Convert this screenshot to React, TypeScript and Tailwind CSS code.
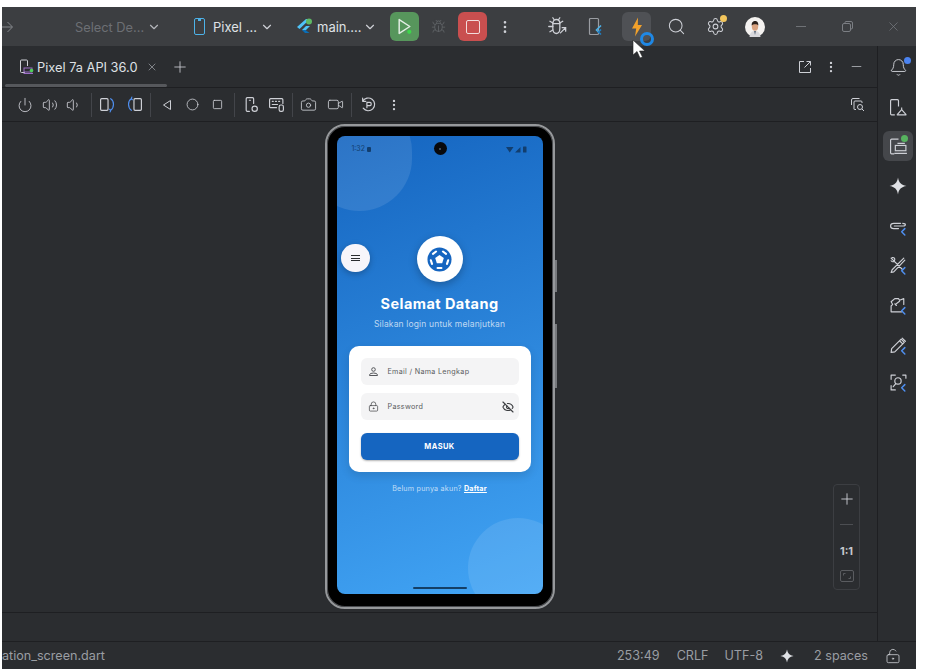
import {
  Bell,
  Bug,
  Camera,
  ChevronDown,
  Circle,
  EllipsisVertical,
  EyeOff,
  LockKeyhole,
  LockKeyholeOpen,
  Minus,
  Plus,
  Power,
  Search,
  Settings,
  Square,
  Video,
  Volume1,
  Volume2,
  X,
} from "lucide-react";
import type { ReactNode } from "react";

const ICON = "#ced0d6";

function Svg({ size = 17, children }: { size?: number; children: ReactNode }) {
  return (
    <svg width={size} height={size} viewBox="0 0 16 16" fill="none" stroke={ICON} strokeWidth="1.1" strokeLinecap="round" strokeLinejoin="round">
      {children}
    </svg>
  );
}

function Sparkle({ size = 16, fill = "#dfe1e5" }: { size?: number; fill?: string }) {
  return (
    <svg width={size} height={size} viewBox="0 0 16 16">
      <path d="M8 0.5C8.6 5 11 7.4 15.5 8C11 8.6 8.6 11 8 15.5C7.4 11 5 8.6 0.5 8C5 7.4 7.4 5 8 0.5Z" fill={fill} />
    </svg>
  );
}

function FlutterMark() {
  return (
    <svg width="17" height="17" viewBox="0 0 17 17">
      <path d="M1 9L10 1H14L3.5 11Z" fill="#4fc3f7" />
      <path d="M6 12L10 8H14L9.5 12.5Z" fill="#4fc3f7" />
      <path d="M6 12L9 15H13.5L9.5 12Z" fill="#0a6fb8" />
      <circle cx="13" cy="3.5" r="3" fill="#5fb865" />
    </svg>
  );
}

function TinyFlutter({ x = 11, y = 10 }: { x?: number; y?: number }) {
  return <path d={`M${x + 3} ${y}L${x} ${y + 3}L${x + 3} ${y + 6}`} stroke="#4f8ff0" strokeWidth="1.4" fill="none" />;
}

function Avatar() {
  return (
    <svg width="20" height="20" viewBox="0 0 20 20">
      <circle cx="10" cy="10" r="10" fill="#f4f2f0" />
      <path d="M4.5 20C5 15 7.5 14 10 14C12.5 14 15 15 15.5 20Z" fill="#d8d8dc" />
      <path d="M9 14L10 18L11 14Z" fill="#5d6b7d" />
      <ellipse cx="10" cy="9.5" rx="3.2" ry="4.2" fill="#d9a27f" />
      <path d="M6.7 8.5C6.5 5 8.5 4 10 4C12 4 13.6 5.2 13.3 8.5C12.5 6.8 8 6.8 6.7 8.5Z" fill="#2c211c" />
    </svg>
  );
}

function Sep() {
  return <div className="h-[24px] w-px shrink-0 bg-[#43454a]" />;
}

function Cell({ w, children }: { w: string; children: ReactNode }) {
  return <div className={`flex shrink-0 items-center justify-center ${w}`}>{children}</div>;
}

function TitleBar() {
  return (
    <div className="relative flex h-[39px] shrink-0 items-center bg-[#3c3e41] text-[13px] text-[#dfe1e5]">
      <svg className="ml-0 shrink-0" width="11" height="12" viewBox="0 0 11 12" fill="none" stroke="#85888d" strokeWidth="1">
        <path d="M0 6H10M5.5 1L10.5 6L5.5 11" />
      </svg>
      <span className="ml-[62px] w-[71px] shrink-0 translate-y-px whitespace-nowrap text-[12.8px] text-[#6c6f74]">Select De...</span>
      <ChevronDown className="ml-[1px] shrink-0" size={14} color="#b4b6bb" />
      <div className="ml-[33px] flex h-[17px] w-[11px] shrink-0 items-start justify-center rounded-[2px] border-[1.5px] border-[#4db2e8]">
        <div className="h-[2px] w-[3px] bg-[#4db2e8]" />
      </div>
      <span className="ml-[8px] w-[42px] shrink-0 translate-y-px whitespace-nowrap">Pixel ...</span>
      <ChevronDown className="ml-[5px] shrink-0" size={14} color="#ced0d6" />
      <div className="ml-[22px] shrink-0"><FlutterMark /></div>
      <span className="ml-[4px] w-[43px] shrink-0 translate-y-px whitespace-nowrap">main....</span>
      <ChevronDown className="ml-[3px] shrink-0" size={14} color="#ced0d6" />
      <div className="ml-[13px] flex h-[29px] w-[29px] shrink-0 items-center justify-center rounded-[6px] bg-[#57965c]">
        <svg width="17" height="17" viewBox="0 0 16 16" fill="none">
          <path d="M3 1.5L13 8L3 14.5Z" stroke="#e3eee4" strokeWidth="1.4" strokeLinejoin="round" />
          <circle cx="12.5" cy="13" r="2" fill="#3dd64b" />
        </svg>
      </div>
      <Cell w="w-[38px]"><Bug size={15} color="#5f6266" strokeWidth={1.4} /></Cell>
      <div className="ml-px flex h-[29px] w-[29px] shrink-0 items-center justify-center rounded-[6px] bg-[#c94f4f]">
        <div className="h-[14px] w-[14px] rounded-[2px] border-[1.5px] border-[#f2dcdc]" />
      </div>
      <Cell w="w-[36px]"><EllipsisVertical size={16} color={ICON} /></Cell>
      <div className="ml-[24px] shrink-0">
        <svg width="21" height="21" viewBox="0 0 18 18" fill="none" stroke={ICON} strokeWidth="1.1" strokeLinecap="round">
          <path d="M5 6.5C5 4 6.5 3 8 3C9.5 3 11 4 11 6.5V11C11 13.5 9.5 15 8 15C6.5 15 5 13.5 5 11Z" />
          <path d="M5 6.5H11M6 3L5 1.5M10 3L11 1.5M5 9H1.5M5 6L2.5 4.5M5 12L2.5 13.5M11 6L13.5 4.5" />
          <path d="M11.5 14.5L16 10M13 10H16V13" />
        </svg>
      </div>
      <div className="ml-[20px] shrink-0">
        <svg width="16" height="19" viewBox="0 0 16 18" fill="none">
          <rect x="1.5" y="1" width="9" height="16" rx="1" stroke="#9a9da2" strokeWidth="1.2" />
          <path d="M13 8L8.5 12.5L11 15" stroke="#4db2e8" strokeWidth="1.6" />
          <path d="M13 12L10.5 14.5L13 17" stroke="#1f7fc4" strokeWidth="1.6" />
        </svg>
      </div>
      <div className="ml-[18px] flex h-[29px] w-[29px] shrink-0 items-center justify-center rounded-[6px] bg-[#4f5155]">
        <svg width="12" height="20" viewBox="0 0 12 20">
          <path d="M7 0.5L1 11.5H5.2L4 19.5L11 8H6.8Z" fill="#f2a12b" />
        </svg>
      </div>
      <div className="ml-[16px] shrink-0"><Search size={19} color={ICON} strokeWidth={1.3} /></div>
      <div className="relative ml-[20px] shrink-0">
        <Settings size={19} color={ICON} strokeWidth={1.3} />
        <div className="absolute right-[-2px] top-[-2px] h-[7px] w-[7px] rounded-full bg-[#f2c55c]" />
      </div>
      <div className="ml-[20px] shrink-0"><Avatar /></div>
      <Cell w="ml-[13px] w-[46px]"><div className="h-px w-[10px] bg-[#6f7276]" /></Cell>
      <Cell w="w-[46px]">
        <svg width="11" height="11" viewBox="0 0 11 11" fill="none" stroke="#7b7e83">
          <rect x="0.5" y="2.5" width="8" height="8" rx="1.5" />
          <path d="M3 2.5V1.5Q3 0.5 4 0.5H9Q10.5 0.5 10.5 2V7Q10.5 8 9 8" />
        </svg>
      </Cell>
      <Cell w="w-[46px]"><X size={15} color="#7b7e83" strokeWidth={1.1} /></Cell>

      {/* busy ring + pointer sit over the button */}
      <div className="absolute left-[638px] top-[25px] h-[14px] w-[14px] rounded-full border-[3px] border-[#1f88e5]" />
      <svg className="absolute left-[630px] top-[32px] z-10" width="14" height="20" viewBox="0 0 14 20">
        <path d="M1 1V16L5 12.5L8 19L10.5 18L7.5 12H13Z" fill="#fff" stroke="#222" strokeWidth="0.6" />
      </svg>
    </div>
  );
}

function TabRow() {
  return (
    <div className="relative flex h-[42px] shrink-0 items-center border-b border-[#1e1f22] text-[12.8px] text-[#dfe1e5]">
      <div className="ml-[17px] shrink-0">
        <svg width="15" height="15" viewBox="0 0 15 15" fill="none">
          <path d="M6 13.5H2.5Q1.5 13.5 1.5 12.5V2Q1.5 1 2.5 1H7.5Q8.5 1 8.5 2V7" stroke={ICON} />
          <rect x="5" y="9" width="8" height="4" stroke="#9b6fc6" />
          <path d="M4.5 14.5H14" stroke="#9b6fc6" />
          <circle cx="12.5" cy="11.5" r="1.8" fill="#4fd15a" />
        </svg>
      </div>
      <span className="ml-[3px] w-[100px] shrink-0 translate-y-px whitespace-nowrap">Pixel 7a API 36.0</span>
      <X className="ml-[9px] shrink-0" size={12} color="#7f8287" />
      <Plus className="ml-[13px] shrink-0" size={18} color={ICON} strokeWidth={1.1} />
      <div className="ml-auto flex items-center pr-[9px]">
        <Cell w="w-[26px]">
          <svg width="14" height="14" viewBox="0 0 14 14" fill="none" stroke={ICON}>
            <path d="M6 1.5H1.5V12.5H12.5V8M8.5 1.5H12.5V5.5M12.5 1.5L6.5 7.5" />
          </svg>
        </Cell>
        <Cell w="w-[26px]"><EllipsisVertical size={14} color={ICON} /></Cell>
        <Cell w="w-[24px]"><Minus size={15} color={ICON} strokeWidth={1.1} /></Cell>
      </div>
      <div className="absolute bottom-0 left-[3px] h-[3px] w-[162px] rounded-full bg-[#56585c]" />
    </div>
  );
}

function Toolbar() {
  return (
    <div className="flex h-[34px] shrink-0 items-center border-b border-[#1e1f22] pl-[10px]">
      <Cell w="w-[25px]"><Power size={16} color={ICON} strokeWidth={1.3} /></Cell>
      <Cell w="w-[25px]"><Volume2 size={16} color={ICON} strokeWidth={1.3} /></Cell>
      <Cell w="w-[24px]"><Volume1 size={16} color={ICON} strokeWidth={1.3} /></Cell>
      <div className="ml-[5px]"><Sep /></div>
      <Cell w="ml-[3px] w-[25px]">
        <Svg>
          <rect x="1.5" y="2.5" width="7" height="11" rx="1" />
          <path d="M11 2.5C14.5 4.5 14.5 11 11 13.5M10 12.5L11 13.5L10.5 15" stroke="#4f8ff0" />
        </Svg>
      </Cell>
      <Cell w="ml-[2px] w-[25px]">
        <Svg>
          <rect x="7.5" y="2.5" width="7" height="11" rx="1" />
          <path d="M5 2.5C1.5 4.5 1.5 11 5 13.5M6 3.5L5 2.5L5.5 1" stroke="#4f8ff0" />
        </Svg>
      </Cell>
      <div className="ml-[3px]"><Sep /></div>
      <Cell w="ml-[3px] w-[25px]"><svg width="10" height="12" viewBox="0 0 10 12" fill="none" stroke={ICON}><path d="M8.5 1.5V10.5L1.5 6Z" strokeLinejoin="round" /></svg></Cell>
      <Cell w="w-[26px]"><Circle size={13} color={ICON} strokeWidth={1.5} /></Cell>
      <Cell w="w-[25px]"><Square size={11} color={ICON} strokeWidth={1.8} /></Cell>
      <div className="ml-[4px]"><Sep /></div>
      <Cell w="ml-[4px] w-[25px]">
        <Svg>
          <path d="M6 14.5H4Q3 14.5 3 13.5V2.5Q3 1.5 4 1.5H9Q10 1.5 10 2.5V7" />
          <circle cx="11" cy="12" r="2.5" />
          <path d="M6 4H7" />
        </Svg>
      </Cell>
      <Cell w="w-[25px]">
        <Svg>
          <path d="M8 11H2.5Q1.5 11 1.5 10V3.5Q1.5 2.5 2.5 2.5H13Q14 2.5 14 3.5V7" />
          <path d="M4 5H5M7 5H8M10 5H11M4 8H9" />
          <rect x="10.5" y="8.5" width="4" height="6" rx="1.5" />
        </Svg>
      </Cell>
      <div className="ml-[3px]"><Sep /></div>
      <Cell w="ml-[3px] w-[25px]"><Camera size={17} color={ICON} strokeWidth={1.2} /></Cell>
      <Cell w="ml-px w-[26px]"><Video size={17} color={ICON} strokeWidth={1.2} /></Cell>
      <div className="ml-[3px]"><Sep /></div>
      <Cell w="ml-[4px] w-[25px]">
        <Svg>
          <path d="M2.5 5A6 6 0 1 1 3 11.5M2.5 2V5H5.5" />
          <path d="M6.5 11V6H9.5Q10.5 6 10.5 7V8Q10.5 9 9.5 9H6.5" />
        </Svg>
      </Cell>
      <Cell w="w-[25px]"><EllipsisVertical size={14} color={ICON} /></Cell>
      <div className="ml-auto pr-[12px]">
        <svg width="15" height="15" viewBox="0 0 15 15" fill="none" stroke={ICON}>
          <path d="M9.5 1.5H3Q1.5 1.5 1.5 3V8" />
          <path d="M6 12.5H4.5Q4 12.5 4 12V5Q4 4 5 4H11Q12 4 12 5V6" />
          <circle cx="10" cy="10" r="2.5" />
          <path d="M12 12L14 14" />
        </svg>
      </div>
    </div>
  );
}

function BallLogo() {
  return (
    <svg width="25" height="25" viewBox="0 0 26 26" fill="none">
      <circle cx="13" cy="13" r="12.5" fill="#1565c0" />
      <path d="M13 8.3L17.5 11.5L15.8 16.8H10.2L8.5 11.5Z" fill="#fff" />
      <path d="M16.6 4.7L19.8 7.1M22 13.8L20.8 17.6M11 21.8H15M4 13.8L5.2 17.6M6.2 7.1L9.4 4.7" stroke="#fff" strokeWidth="2.2" strokeLinecap="round" />
    </svg>
  );
}

function Phone() {
  return (
    <div className="relative mt-[2px] h-[485px] w-[230px] shrink-0 rounded-[20px] border-[2px] border-[#96989b] bg-black p-[10px] shadow-[inset_0_0_0_1px_#4a4c50]">
      <div className="absolute right-[-4px] top-[134px] h-[32px] w-[2px] bg-[#77797d]" />
      <div className="absolute right-[-4px] top-[198px] h-[64px] w-[2px] bg-[#77797d]" />
      <div className="relative flex h-[458px] w-[206px] flex-col items-center overflow-hidden rounded-[8px] bg-[linear-gradient(160deg,#1565c0,#42a5f5)] font-['Inter',sans-serif]">
        {/* decorative blobs */}
        <div className="absolute left-[-30px] top-[-37px] h-[112px] w-[105px] rounded-full bg-white/10" />
        <div className="absolute left-[131px] top-[382px] h-[100px] w-[100px] rounded-full bg-white/10" />

        <div className="relative flex h-[26px] w-full shrink-0 items-center px-[15px] text-[7px] text-[#123e6e]">
          <span>1:32</span>
          <div className="ml-[2px] h-[5px] w-[4px] rounded-[1px] bg-[#123e6e]" />
          <div className="absolute left-[97px] top-[6px] flex h-[13px] w-[13px] items-center justify-center rounded-full bg-[#08090c]">
            <div className="h-[2px] w-[2px] rounded-full bg-[#55606e]" />
          </div>
          <div className="ml-auto flex items-center">
            <svg width="22" height="7" viewBox="0 0 22 7">
              <path d="M0 1H7.5L3.75 6.5ZM9 6.5L14.5 1V6.5Z" fill="#123e6e" />
              <rect x="17" y="0.5" width="3.5" height="6" rx="0.6" fill="#123e6e" />
            </svg>
          </div>
        </div>

        <div className="relative mt-[74px] flex h-[46px] w-[46px] shrink-0 items-center justify-center rounded-full bg-white shadow-[0_3px_8px_rgba(0,0,0,0.25)]">
          <BallLogo />
        </div>
        <div className="relative mt-[13px] whitespace-nowrap text-[14.5px] font-bold leading-[18px] tracking-[0.45px] text-white">Selamat Datang</div>
        <div className="relative mt-[4px] whitespace-nowrap text-[8.5px] leading-[14px] tracking-[0.15px] text-white/70">Silakan login untuk melanjutkan</div>

        <div className="relative mt-[15px] flex h-[126px] w-[182px] shrink-0 flex-col rounded-[10px] bg-white p-[12px] shadow-[0_4px_10px_rgba(0,0,0,0.12)]">
          <div className="flex h-[27px] shrink-0 items-center rounded-[6px] bg-[#f4f4f5] pl-[7px] text-[7.2px] tracking-[0.3px] text-[#5a5c60]">
            <svg width="11" height="11" viewBox="0 0 11 11" fill="none" stroke="#55575b">
              <circle cx="5.5" cy="3.5" r="1.8" />
              <path d="M1.5 9.5V9Q1.5 7 5.5 7Q9.5 7 9.5 9V9.5Z" />
            </svg>
            <span className="ml-[9px] translate-y-px whitespace-nowrap">Email / Nama Lengkap</span>
          </div>
          <div className="mt-[8px] flex h-[27px] shrink-0 items-center rounded-[6px] bg-[#f4f4f5] pl-[7px] pr-[5px] text-[7.2px] tracking-[0.3px] text-[#5a5c60]">
            <LockKeyhole size={11} color="#444649" strokeWidth={1.6} />
            <span className="ml-[9px] translate-y-px">Password</span>
            <EyeOff className="ml-auto" size={12} color="#3c3e41" strokeWidth={2.2} />
          </div>
          <div className="mt-[13px] flex h-[27px] shrink-0 items-center justify-center rounded-[6px] bg-[#1565c0] text-[7.5px] font-bold tracking-[0.4px] text-white shadow-[0_1px_2px_rgba(0,0,0,0.3)]">MASUK</div>
        </div>

        <div className="relative mt-[12px] whitespace-nowrap text-[7.2px] leading-[10px] tracking-[0.2px] text-white/70">
          Belum punya akun? <span className="font-bold text-white underline">Daftar</span>
        </div>

        <div className="absolute bottom-[5px] left-[76px] h-[2px] w-[54px] rounded-full bg-[#143f66]" />
      </div>
      {/* floating menu button drawn by the app, over the screen */}
      <div className="absolute left-[14px] top-[118px] flex h-[28px] w-[29px] flex-col items-center justify-center gap-[1.5px] rounded-full bg-[#f7f5fa] shadow-[0_2px_6px_rgba(0,0,0,0.25)]">
        <div className="h-px w-[9px] bg-[#2b2d30]" />
        <div className="h-px w-[9px] bg-[#2b2d30]" />
        <div className="h-px w-[9px] bg-[#2b2d30]" />
      </div>
    </div>
  );
}

function ZoomControls() {
  return (
    <div className="absolute right-[17px] top-[362px] flex h-[106px] w-[27px] flex-col items-center rounded-[4px] border border-[#3c3e42] bg-[#2b2d30]">
      <Plus className="mt-[5px]" size={18} color={ICON} strokeWidth={1.2} />
      <div className="mt-[16px] h-px w-[13px] bg-[#4c4e52]" />
      <div className="mt-[19px] text-[11px] font-bold leading-[14px] text-[#c6c8cd]">1:1</div>
      <div className="mt-[12px] flex h-[12px] w-[14px] items-center justify-center rounded-[2px] border border-[#5a5c60]">
        <svg width="8" height="6" viewBox="0 0 8 6" fill="none" stroke="#5a5c60"><path d="M0.5 2.5V0.5H2.5M7.5 3.5V5.5H5.5" /></svg>
      </div>
    </div>
  );
}

const STRIPE = ["link", "tools", "puzzle", "pen", "scan"];

function StripeIcon({ kind }: { kind: string }) {
  return (
    <svg width="19" height="19" viewBox="0 0 18 18" fill="none" stroke={ICON} strokeWidth="1.1" strokeLinecap="round" strokeLinejoin="round">
      {kind === "link" && <path d="M11 6H4.5Q1.5 6 1.5 8.5Q1.5 11 4.5 11H9M5 8.5H13.5Q15.5 8.5 15.5 7Q15.5 6 13 6" />}
      {kind === "tools" && <path d="M2 2L13 13M14 2L3 13L2 15.5L4.5 15L15 4M2 4.5A2 2 0 0 0 5 5L5.5 3A2 2 0 0 0 3 1.5" />}
      {kind === "puzzle" && <path d="M2 15V9.5L3.5 8L2 5.5L5.5 2.5H9L10 4L14 2.5V8M2 15H12M6 8L10 5M7 9L5.5 7.5" />}
      {kind === "pen" && <path d="M2 15.5L2.5 12L11.5 3L14.5 6L5.5 15ZM10 4.5L13 7.5M12.5 2L15.5 5" />}
      {kind === "scan" && <path d="M2 6V2H6M13 2H16V5M2 12V16H6M8.5 10.5A3 3 0 1 0 8.5 4.5A3 3 0 0 0 8.5 10.5ZM6.5 10L4 13" />}
      <TinyFlutter x={12} y={11} />
    </svg>
  );
}

function RightStripe() {
  return (
    <div className="flex w-[39px] shrink-0 flex-col items-center border-l border-[#1e1f22] pl-[2px] pt-[12px]">
      <div className="relative flex h-[18px] items-center">
        <Bell size={19} color={ICON} strokeWidth={1.2} />
        <div className="absolute right-[-3px] top-[-1px] h-[7px] w-[7px] rounded-full bg-[#4b83f0]" />
      </div>
      <div className="mt-[22px] flex h-[18px] items-center">
        <svg width="19" height="19" viewBox="0 0 18 18" fill="none" stroke={ICON} strokeWidth="1.1" strokeLinejoin="round">
          <path d="M5.5 16H2.5Q1.5 16 1.5 15V2.5Q1.5 1.5 2.5 1.5H8Q9 1.5 9 2.5V8" />
          <path d="M12 9V11L16 15.5Q16.5 16 16 16H8Q7.5 16 8 15.5L12 11" />
        </svg>
      </div>
      <div className="relative mt-[15px] flex h-[30px] w-[30px] items-center justify-center rounded-[6px] bg-[#45474b]">
        <svg width="19" height="19" viewBox="0 0 18 18" fill="none" stroke={ICON} strokeWidth="1.1">
          <path d="M5 16H2.5Q1.5 16 1.5 15V3Q1.5 2 2.5 2H9" />
          <rect x="6" y="8" width="10" height="5" />
          <path d="M5 15.5H17M8 6H15" />
        </svg>
        <div className="absolute right-[5px] top-[4px] h-[7px] w-[7px] rounded-full bg-[#57b35f]" />
      </div>
      <div className="mt-[16px]"><Sparkle size={18} /></div>
      <div className="mt-[22px] flex h-[18px] items-center"><StripeIcon kind={STRIPE[0]} /></div>
      <div className="mt-[21px] flex h-[18px] items-center"><StripeIcon kind={STRIPE[1]} /></div>
      <div className="mt-[22px] flex h-[18px] items-center"><StripeIcon kind={STRIPE[2]} /></div>
      <div className="mt-[22px] flex h-[18px] items-center"><StripeIcon kind={STRIPE[3]} /></div>
      <div className="mt-[19px] flex h-[18px] items-center"><StripeIcon kind={STRIPE[4]} /></div>
    </div>
  );
}

function StatusBar() {
  return (
    <div className="flex h-[28px] shrink-0 items-center overflow-hidden border-t border-[#1e1f22] pr-[15px] pt-px text-[12.6px] text-[#9a9da3]">
      <span>ation_screen.dart</span>
      <span className="ml-auto">253:49</span>
      <span className="ml-[17px]">CRLF</span>
      <span className="ml-[16px]">UTF-8</span>
      <div className="ml-[17px]"><Sparkle size={14} /></div>
      <span className="ml-[20px]">2 spaces</span>
      <LockKeyholeOpen className="ml-[17px]" size={16} color={ICON} strokeWidth={1.2} />
    </div>
  );
}

export default function App() {
  return (
    <div className="h-[669px] w-[927px] overflow-hidden bg-white pl-[2px] pt-[7px] font-['Inter',sans-serif]">
      <div className="flex h-[662px] w-[914px] flex-col bg-[#2b2d30]">
        <TitleBar />
        <div className="flex min-h-0 flex-1">
          <div className="flex min-w-0 flex-1 flex-col">
            <TabRow />
            <Toolbar />
            <div className="relative flex h-[491px] shrink-0 justify-center border-b border-[#1e1f22]">
              <Phone />
              <ZoomControls />
            </div>
            <div className="flex-1" />
          </div>
          <RightStripe />
        </div>
        <StatusBar />
      </div>
    </div>
  );
}
